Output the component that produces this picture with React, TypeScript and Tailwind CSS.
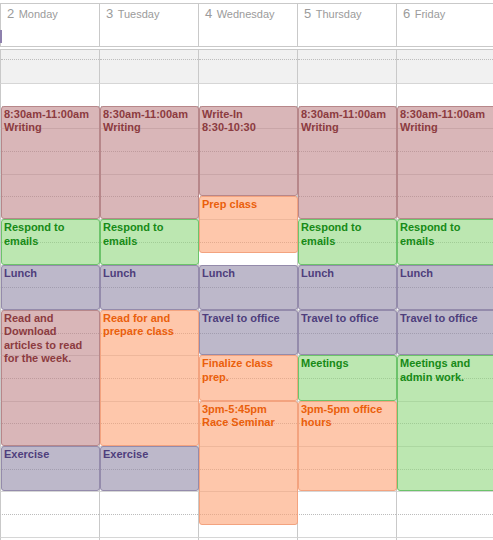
type Tone = "red" | "green" | "purple" | "orange";

type CalEvent = {
  day: number;
  from: number;
  to: number;
  tone: Tone;
  lines: string[];
};

const days = [
  ["2", "Monday"],
  ["3", "Tuesday"],
  ["4", "Wednesday"],
  ["5", "Thursday"],
  ["6", "Friday"],
];

const tones: Record<Tone, string> = {
  red: "bg-[rgba(192,133,137,0.6)] border-[#b7878a] text-[#8c3b40]",
  green: "bg-[rgba(143,215,125,0.6)] border-[#6cc36b] text-[#178a17]",
  purple: "bg-[rgba(145,137,167,0.6)] border-[#948bab] text-[#4e3e7c]",
  orange: "bg-[rgba(253,162,115,0.6)] border-[#f3a37f] text-[#ea5f0c]",
};

const writing = ["8:30am-11:00am", "Writing"];
const respond = ["Respond to", "emails"];

const events: CalEvent[] = [
  // monday
  { day: 0, from: 8.5, to: 11, tone: "red", lines: writing },
  { day: 0, from: 11, to: 12, tone: "green", lines: respond },
  { day: 0, from: 12, to: 13, tone: "purple", lines: ["Lunch"] },
  { day: 0, from: 13, to: 16, tone: "red", lines: ["Read and", "Download", "articles to read", "for the week."] },
  { day: 0, from: 16, to: 17, tone: "purple", lines: ["Exercise"] },
  // tuesday
  { day: 1, from: 8.5, to: 11, tone: "red", lines: writing },
  { day: 1, from: 11, to: 12, tone: "green", lines: respond },
  { day: 1, from: 12, to: 13, tone: "purple", lines: ["Lunch"] },
  { day: 1, from: 13, to: 16, tone: "orange", lines: ["Read for and", "prepare class"] },
  { day: 1, from: 16, to: 17, tone: "purple", lines: ["Exercise"] },
  // wednesday
  { day: 2, from: 8.5, to: 10.5, tone: "red", lines: ["Write-In", "8:30-10:30"] },
  { day: 2, from: 10.5, to: 11.75, tone: "orange", lines: ["Prep class"] },
  { day: 2, from: 12, to: 13, tone: "purple", lines: ["Lunch"] },
  { day: 2, from: 13, to: 14, tone: "purple", lines: ["Travel to office"] },
  { day: 2, from: 14, to: 15, tone: "orange", lines: ["Finalize class", "prep."] },
  { day: 2, from: 15, to: 17.75, tone: "orange", lines: ["3pm-5:45pm", "Race Seminar"] },
  // thursday
  { day: 3, from: 8.5, to: 11, tone: "red", lines: writing },
  { day: 3, from: 11, to: 12, tone: "green", lines: respond },
  { day: 3, from: 12, to: 13, tone: "purple", lines: ["Lunch"] },
  { day: 3, from: 13, to: 14, tone: "purple", lines: ["Travel to office"] },
  { day: 3, from: 14, to: 15, tone: "green", lines: ["Meetings"] },
  { day: 3, from: 15, to: 17, tone: "orange", lines: ["3pm-5pm office", "hours"] },
  // friday
  { day: 4, from: 8.5, to: 11, tone: "red", lines: writing },
  { day: 4, from: 11, to: 12, tone: "green", lines: respond },
  { day: 4, from: 12, to: 13, tone: "purple", lines: ["Lunch"] },
  { day: 4, from: 13, to: 14, tone: "purple", lines: ["Travel to office"] },
  { day: 4, from: 14, to: 17, tone: "green", lines: ["Meetings and", "admin work."] },
];

// quarter-hour rows, row 1 is the shaded band before 8:00
const rowOf = (t: number) => 2 + Math.round((t - 8) * 4);

const halfHours = Array.from({ length: 21 }, (_, i) => i);

export default function App() {
  return (
    <div className="h-[540px] w-[493px] overflow-hidden bg-white font-['Liberation_Sans',Arial,sans-serif]">
      {/* day header */}
      <div className="relative mt-[3px] grid h-[44px] grid-cols-[repeat(5,99px)] border-y border-[#c9c9c9]">
        {days.map(([num, name]) => (
          <div key={name} className="border-l border-[#c9c9c9] pl-[6px] pt-px leading-[16px] text-[#9b9b9b]">
            <span className="text-[13px]">{num}</span> <span className="text-[11px]">{name}</span>
          </div>
        ))}
        <div className="absolute left-0 top-[26px] h-[13px] w-[2px] bg-[#8d80ad]" />
      </div>

      <div className="mt-[2px] grid">
        {/* hour lines */}
        <div className="col-start-1 row-start-1 grid grid-cols-[repeat(5,99px)] grid-rows-[34px_repeat(21,22.7px)]">
          {days.map(([, name]) => (
            <div key={"band" + name} className="border-l border-t border-l-[#c9c9c9] border-t-[#c9c9c9] bg-[#f1f1f1]">
              <div className="h-[10px] border-b border-dotted border-[#bdbdbd]" />
            </div>
          ))}
          {halfHours.map((i) =>
            days.map(([, name]) => (
              <div
                key={name + i}
                className={
                  i % 2 === 0
                    ? "border-l border-t border-l-[#c9c9c9] border-t-[#d6d6d6]"
                    : "border-l border-t border-dotted border-l-[#c9c9c9] border-t-[#bcbcbc] [border-left-style:solid]"
                }
              />
            ))
          )}
        </div>

        {/* events */}
        <div className="col-start-1 row-start-1 grid grid-cols-[repeat(5,99px)] grid-rows-[34px_repeat(41,11.35px)]">
          {events.map((ev, i) => (
            <div
              key={i}
              style={{ gridColumn: ev.day + 1, gridRow: `${rowOf(ev.from)} / ${rowOf(ev.to)}` }}
              className={`-mr-px ml-px overflow-hidden rounded-[3px] border px-[2px] pt-px text-[11px] font-bold leading-[13.5px] ${tones[ev.tone]}`}
            >
              {ev.lines.map((l) => (
                <div key={l} className="whitespace-nowrap">
                  {l}
                </div>
              ))}
            </div>
          ))}
        </div>
      </div>
    </div>
  );
}
